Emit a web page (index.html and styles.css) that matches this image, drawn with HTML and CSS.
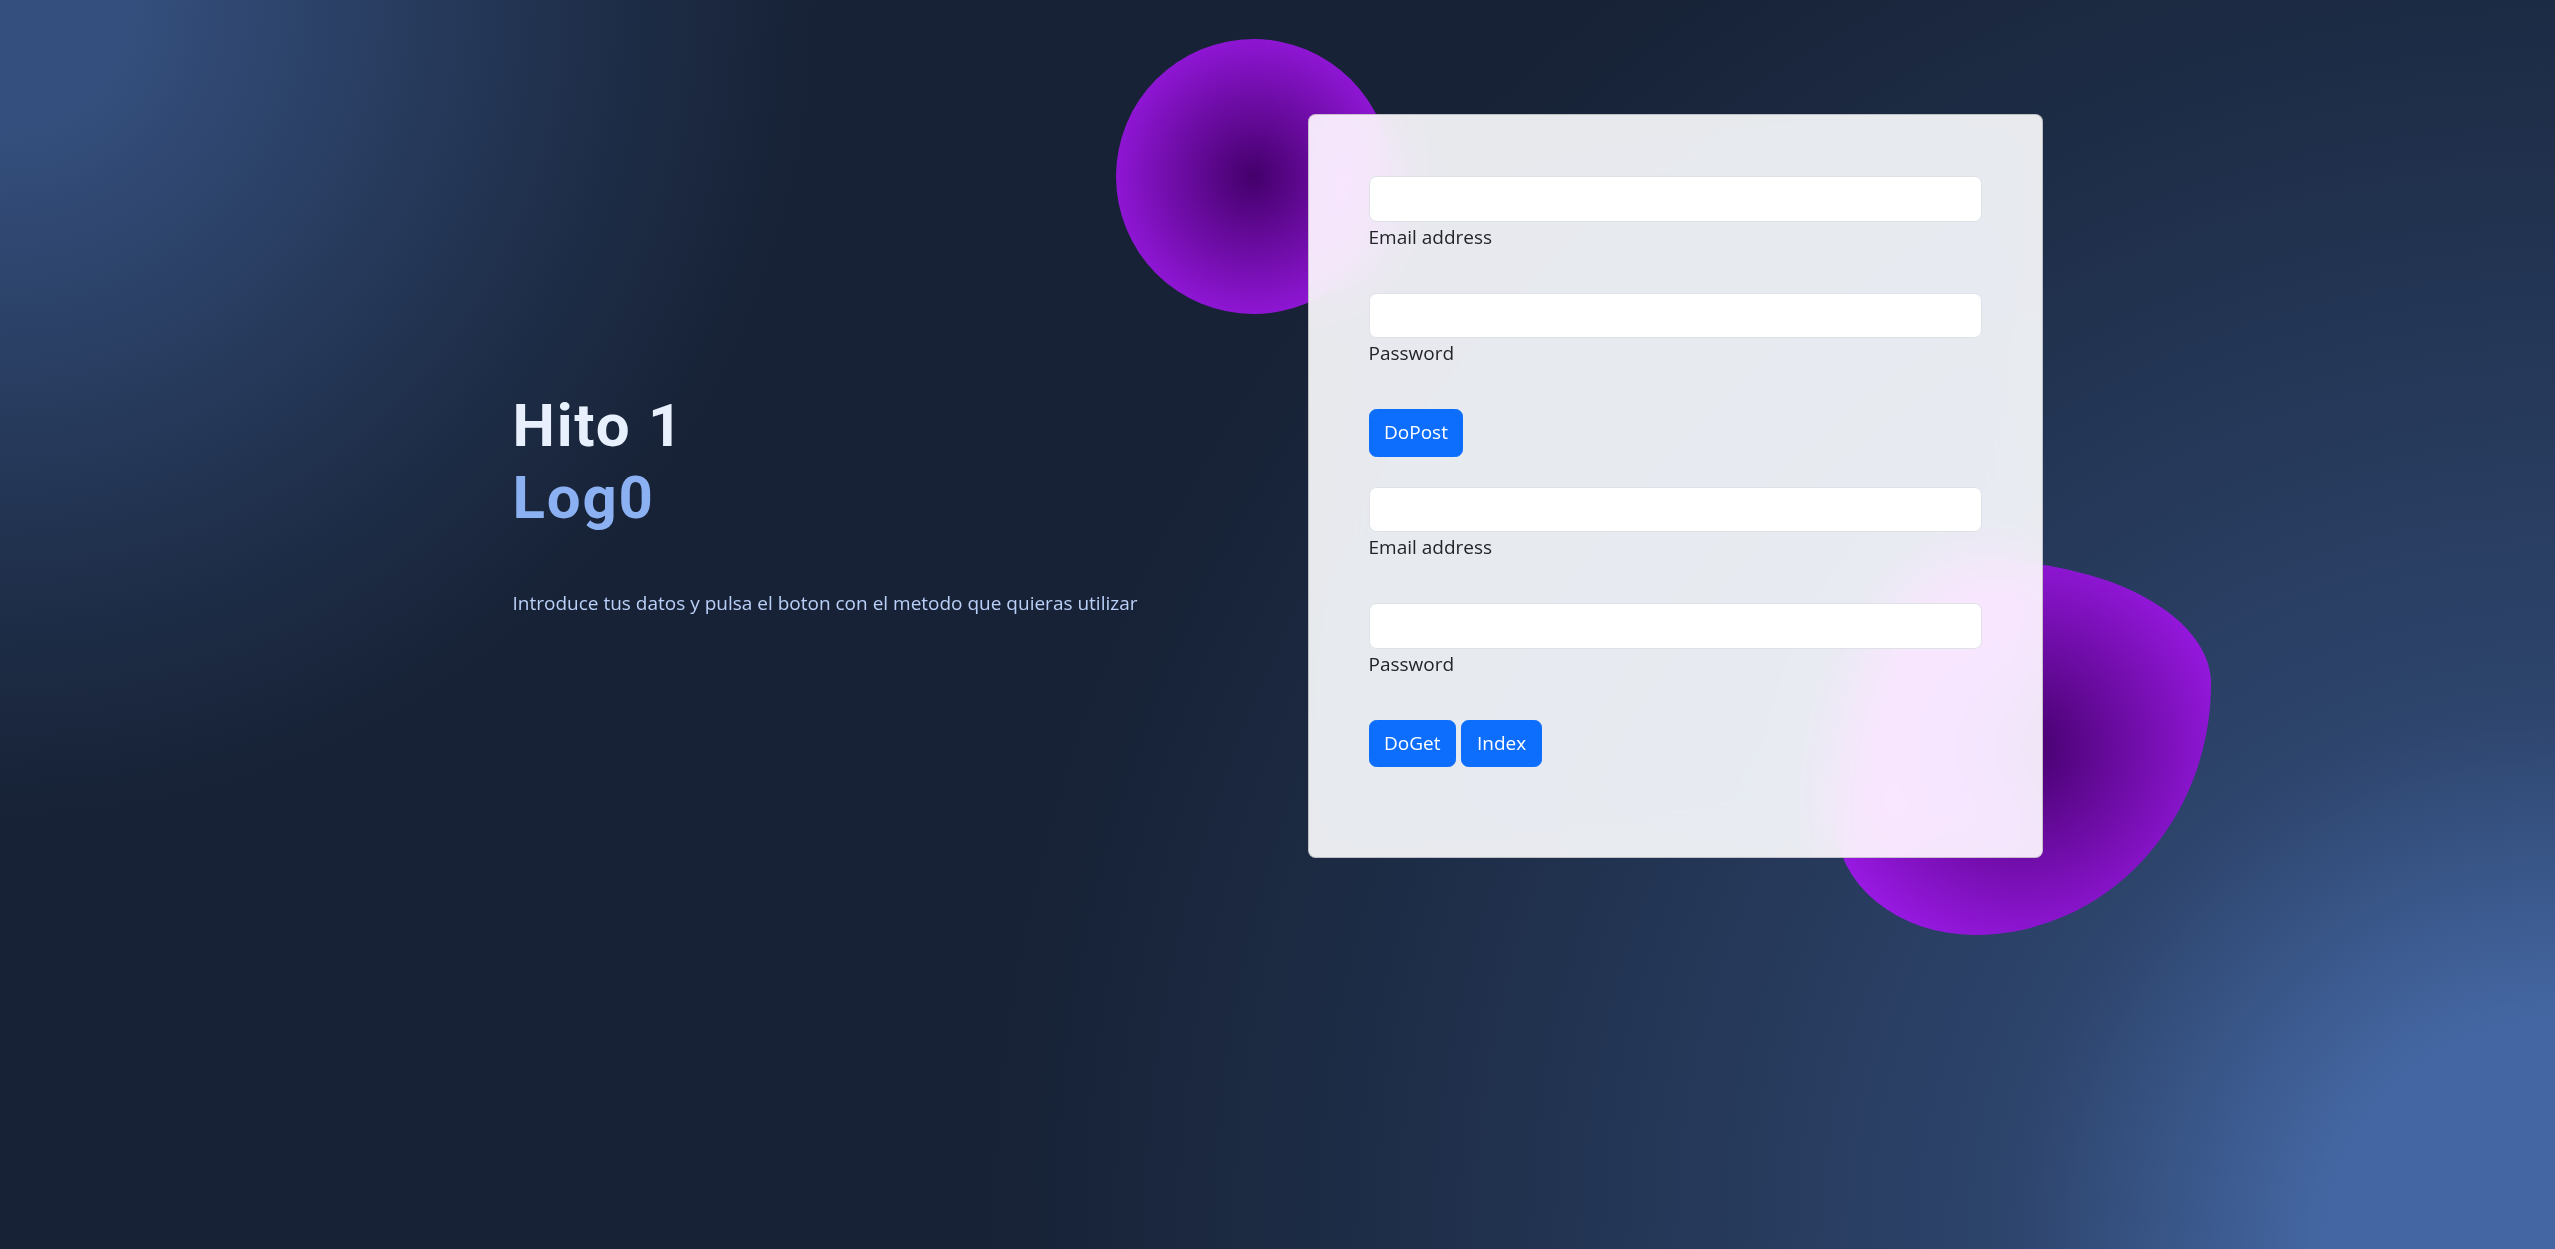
FILE: index.html
```html
<!DOCTYPE html>
<html lang="es">
<head>
<meta charset="utf-8">
<title>Hito 1</title>
<link rel="stylesheet" href="styles.css">
</head>
<body>
<section class="page">
  <div class="container">
    <div class="row">
      <div class="intro">
        <h1 class="title"><span class="title-line">Hito 1</span><span class="title-line title-accent">Log0</span></h1>
        <p class="lead-text">Introduce tus datos y pulsa el boton con el metodo que quieras utilizar</p>
      </div>
      <div class="form-col">
        <div class="shape shape-1"></div>
        <div class="shape shape-2"></div>
        <div class="card">
          <div class="card-body">
            <form class="login-form">
              <div class="field">
                <input class="form-control" type="email">
                <label class="form-label">Email address</label>
              </div>
              <div class="field">
                <input class="form-control" type="password">
                <label class="form-label">Password</label>
              </div>
              <div class="btn-row">
                <button class="btn" type="button">DoPost</button>
              </div>
              <div class="field">
                <input class="form-control" type="email">
                <label class="form-label">Email address</label>
              </div>
              <div class="field">
                <input class="form-control" type="password">
                <label class="form-label">Password</label>
              </div>
              <div class="btn-row">
                <button class="btn" type="button">DoGet</button>
                <button class="btn" type="button">Index</button>
              </div>
            </form>
          </div>
        </div>
      </div>
    </div>
  </div>
</section>
</body>
</html>
```
FILE: styles.css
```css
* { box-sizing: border-box; }

html, body {
  margin: 0;
  padding: 0;
}

body {
  font-family: "Open Sans", "Noto Sans", sans-serif;
  font-size: 19px;
  line-height: 30px;
  color: #212529;
}

.page {
  min-height: 100vh;
  overflow: hidden;
  background-color: hsl(218, 41%, 15%);
  background-image:
    radial-gradient(812.5px circle at 0% 0%,
      hsl(218, 41%, 35%) 15%,
      hsl(218, 41%, 30%) 35%,
      hsl(218, 41%, 20%) 75%,
      hsl(218, 41%, 19%) 80%,
      transparent 100%),
    radial-gradient(1562.5px circle at 100% 100%,
      hsl(218, 41%, 45%) 15%,
      hsl(218, 41%, 30%) 35%,
      hsl(218, 41%, 20%) 75%,
      hsl(218, 41%, 19%) 80%,
      transparent 100%);
}

.container {
  width: 1650px;
  margin: 0 auto;
  padding: 114px 60px 120px;
}

.row {
  display: grid;
  grid-template-columns: 1fr 1fr;
  column-gap: 60px;
  align-items: center;
}

.intro {
  position: relative;
  z-index: 10;
}

.title {
  margin: 66px 0 54px;
  font-family: Roboto, "Open Sans", sans-serif;
  font-size: 60px;
  font-weight: 700;
  line-height: 72px;
  letter-spacing: 1.8px;
  color: hsl(218, 81%, 95%);
}

.title-line {
  display: block;
}

.title-accent {
  color: hsl(218, 81%, 75%);
}

.lead-text {
  margin: 0 0 30px;
  color: hsl(218, 81%, 85%);
  line-height: 30px;
}

.form-col {
  position: relative;
}

.shape {
  position: absolute;
  background: radial-gradient(#44006b, #ad1fff);
  overflow: hidden;
}

.shape-1 {
  width: 275px;
  height: 275px;
  top: -75px;
  left: -192px;
  border-radius: 50%;
}

.shape-2 {
  width: 375px;
  height: 375px;
  bottom: -77px;
  right: -168px;
  border-radius: 38% 62% 63% 37% / 70% 33% 67% 30%;
}

.card {
  position: relative;
  background-color: hsla(0, 0%, 100%, 0.9);
  backdrop-filter: saturate(200%) blur(31px);
  border: 1px solid rgba(0, 0, 0, 0.175);
  border-radius: 7.5px;
}

.card-body {
  padding: 61px 60px 60px;
}

.field {
  margin-bottom: 41px;
}

.form-control {
  display: block;
  width: 100%;
  height: 45.5px;
  padding: 7.5px 15px;
  font: inherit;
  color: #212529;
  background-color: #fff;
  border: 1px solid #dee2e6;
  border-radius: 7.5px;
  outline: none;
}

.form-label {
  display: block;
  height: 30px;
  line-height: 30px;
}

.btn-row {
  display: flex;
  gap: 5.5px;
  margin-bottom: 30px;
}

.btn {
  height: 47.5px;
  padding: 0 14.5px;
  font: inherit;
  line-height: 1;
  color: #fff;
  background-color: #0d6efd;
  border: 1px solid #0d6efd;
  border-radius: 7.5px;
}
```
